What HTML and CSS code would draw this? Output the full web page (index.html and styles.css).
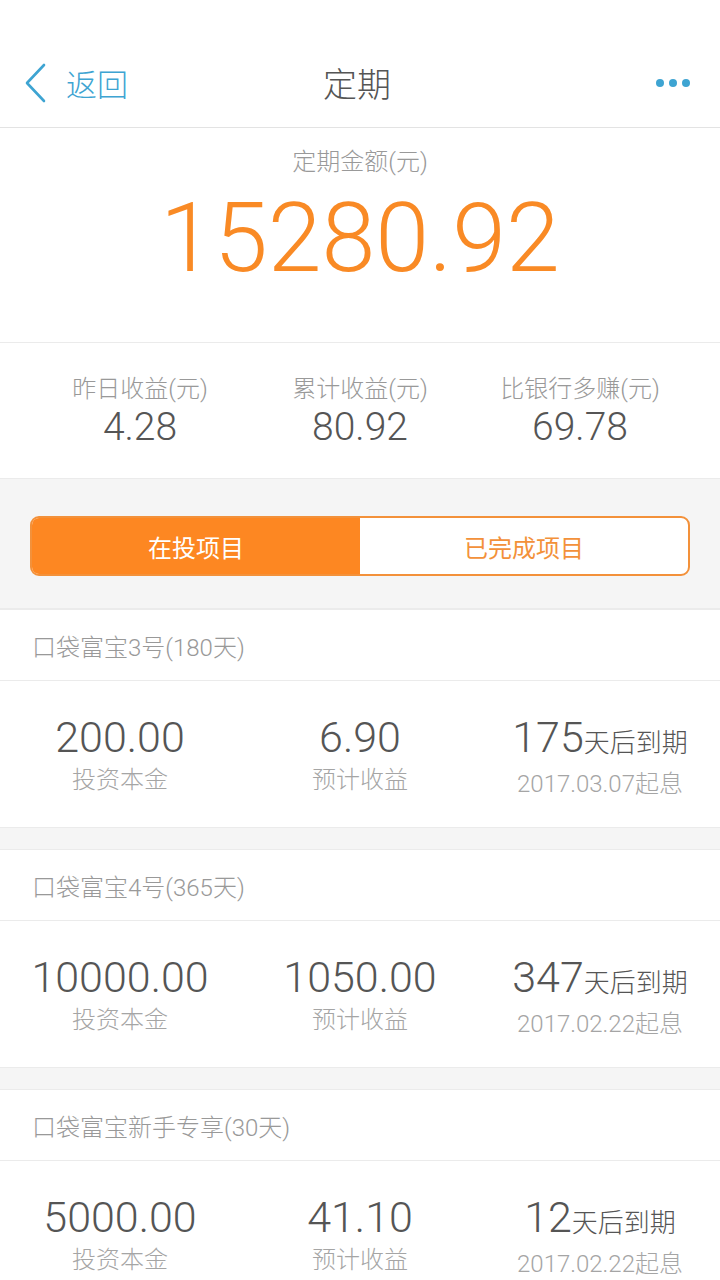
FILE: index.html
```html
<!DOCTYPE html>
<html lang="zh-CN">
<head>
    <meta charset="UTF-8">
    <meta name="viewport" content="width=device-width, initial-scale=1.0">
    <title>定期</title>
    <link rel="stylesheet" href="styles.css">
</head>
<body>
    <div class="nav">
        <a class="back">
            <svg class="backIcon" width="24" height="40" viewBox="0 0 24 40">
                <path d="M20 2 L3 20 L20 38" fill="none" stroke="#3ea4d2" stroke-width="2.6" stroke-linecap="round" stroke-linejoin="round"/>
            </svg>
            <span>返回</span>
        </a>
        <h1 class="title">定期</h1>
        <div class="more"><i></i><i></i><i></i></div>
    </div>

    <div class="total">
        <p class="totalLabel">定期金额(元)</p>
        <p class="totalNum">15280.92</p>
    </div>

    <div class="stats">
        <div class="statItem">
            <p class="statLabel">昨日收益(元)</p>
            <p class="statNum">4.28</p>
        </div>
        <div class="statItem">
            <p class="statLabel">累计收益(元)</p>
            <p class="statNum">80.92</p>
        </div>
        <div class="statItem">
            <p class="statLabel">比银行多赚(元)</p>
            <p class="statNum">69.78</p>
        </div>
    </div>

    <div class="tabBox">
        <div class="tabs">
            <div class="tab active">在投项目</div>
            <div class="tab">已完成项目</div>
        </div>
    </div>

    <div class="card">
        <div class="cardHead">口袋富宝3号(180天)</div>
        <div class="cardBody">
            <div class="col">
                <p class="num">200.00</p>
                <p class="label">投资本金</p>
            </div>
            <div class="col">
                <p class="num">6.90</p>
                <p class="label">预计收益</p>
            </div>
            <div class="col">
                <p class="num">175<span class="unit">天后到期</span></p>
                <p class="label">2017.03.07起息</p>
            </div>
        </div>
    </div>

    <div class="card">
        <div class="cardHead">口袋富宝4号(365天)</div>
        <div class="cardBody">
            <div class="col">
                <p class="num">10000.00</p>
                <p class="label">投资本金</p>
            </div>
            <div class="col">
                <p class="num">1050.00</p>
                <p class="label">预计收益</p>
            </div>
            <div class="col">
                <p class="num">347<span class="unit">天后到期</span></p>
                <p class="label">2017.02.22起息</p>
            </div>
        </div>
    </div>

    <div class="card">
        <div class="cardHead">口袋富宝新手专享(30天)</div>
        <div class="cardBody">
            <div class="col">
                <p class="num">5000.00</p>
                <p class="label">投资本金</p>
            </div>
            <div class="col">
                <p class="num">41.10</p>
                <p class="label">预计收益</p>
            </div>
            <div class="col">
                <p class="num">12<span class="unit">天后到期</span></p>
                <p class="label">2017.02.22起息</p>
            </div>
        </div>
    </div>
</body>
</html>
```

FILE: styles.css
```css
* {
    box-sizing: border-box;
    margin: 0;
    padding: 0;
}
body {
    background-color: #f5f5f5;
    font-family: Roboto, "Noto Sans CJK SC", sans-serif;
    font-weight: 300;
    color: #555;
    height: 1280px;
    overflow: hidden;
}
.nav {
    background-color: #fff;
    padding-top: 38px;
    height: 128px;
    border-bottom: 1px solid #e3e3e3;
    display: flex;
    align-items: center;
    justify-content: space-between;
    padding-left: 24px;
    padding-right: 30px;
}
.back {
    display: flex;
    align-items: center;
    width: 160px;
    color: #3ea4d2;
    font-size: 31px;
    font-family: "Noto Sans CJK SC", sans-serif;
    font-weight: 300;
}
.backIcon {
    margin-right: 18px;
}
.title {
    font-size: 34px;
    font-weight: 300;
    font-family: "Noto Sans CJK SC", sans-serif;
    color: #555;
}
.more {
    width: 160px;
    display: flex;
    justify-content: flex-end;
    gap: 5px;
}
.more i {
    width: 8px;
    height: 8px;
    border-radius: 50%;
    background-color: #3ea4d2;
}
.total {
    background-color: #fff;
    height: 215px;
    border-bottom: 1px solid #ebebeb;
    text-align: center;
    padding-top: 17px;
}
.totalLabel {
    font-size: 24px;
    color: #999;
    line-height: 34px;
}
.totalNum {
    font-size: 97px;
    color: #f98a25;
    line-height: 100px;
    margin-top: 9px;
}
.stats {
    background-color: #fff;
    height: 136px;
    border-bottom: 1px solid #ebebeb;
    display: flex;
    padding: 31px 30px 0;
}
.statItem {
    flex: 1;
    text-align: center;
}
.statLabel {
    font-size: 24px;
    color: #999;
    line-height: 30px;
}
.statNum {
    font-size: 39px;
    color: #555;
    line-height: 44px;
    margin-top: 1px;
}
.tabBox {
    height: 130px;
    padding: 37px 30px 0;
    border-bottom: 1px solid #ebebeb;
}
.tabs {
    display: flex;
    height: 60px;
    border: 2px solid #f3913a;
    border-radius: 9px;
    overflow: hidden;
    background-color: #fff;
}
.tab {
    flex: 1;
    display: flex;
    align-items: center;
    justify-content: center;
    font-size: 24px;
    color: #f3913a;
    font-family: "Noto Sans CJK SC", sans-serif;
    font-weight: 400;
}
.tab.active {
    background-color: #fd8722;
    color: #fff;
}
.card {
    background-color: #fff;
    margin-bottom: 21px;
    border-bottom: 1px solid #ebebeb;
    border-top: 1px solid #ebebeb;
}
.card:first-of-type {
    border-top: none;
}
.cardHead {
    height: 71px;
    line-height: 76px;
    padding-left: 32px;
    font-size: 24px;
    color: #999;
    border-bottom: 1px solid #ebebeb;
}
.cardBody {
    height: 146px;
    display: flex;
    padding-top: 32px;
}
.col {
    flex: 1;
    text-align: center;
}
.num {
    font-size: 43px;
    line-height: 48px;
    color: #555;
}
.unit {
    font-size: 26px;
    font-family: "Noto Sans CJK SC", sans-serif;
}
.label {
    font-size: 24px;
    line-height: 34px;
    color: #a5a5a5;
    margin-top: 2px;
}
```
